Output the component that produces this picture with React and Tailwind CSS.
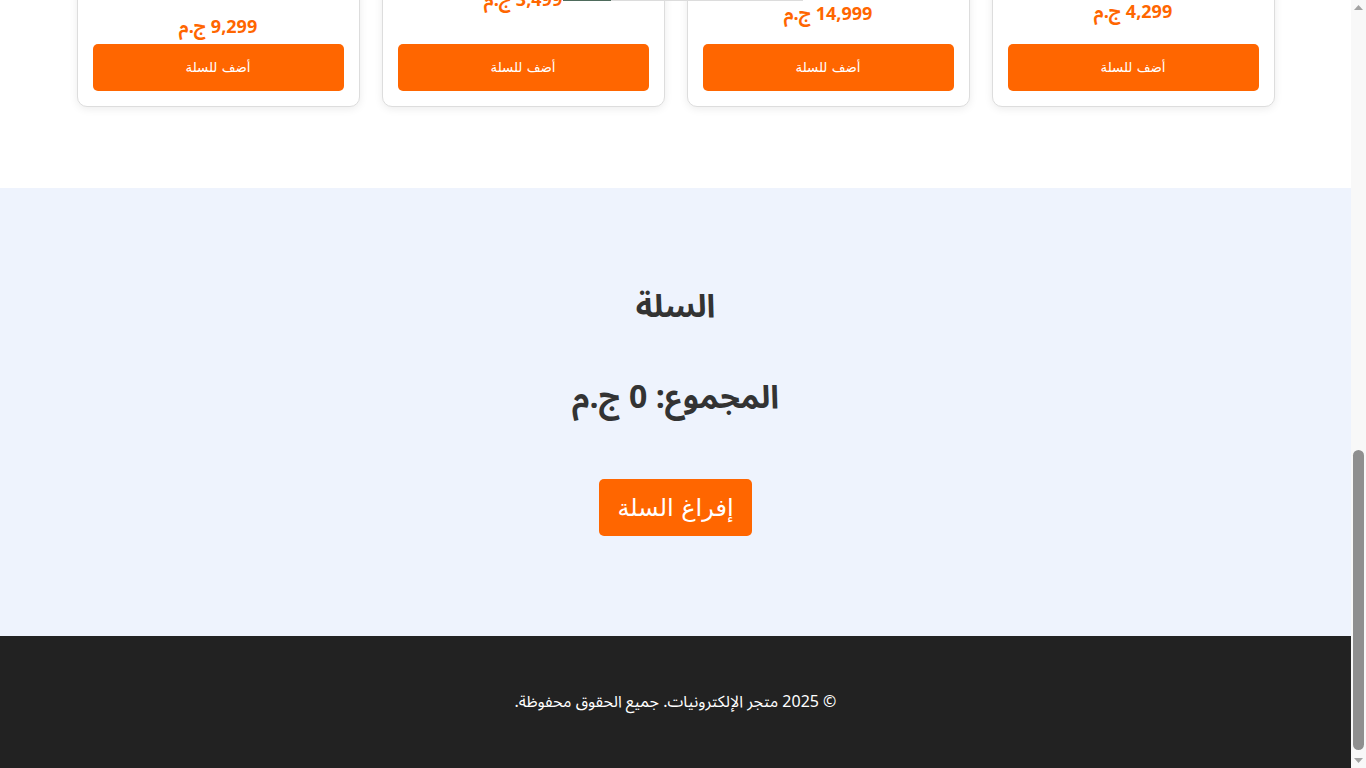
import React from "react";

const products = [
  { name: "سماعات لاسلكية", desc: "سماعات بلوتوث بجودة صوت عالية وعزل للضوضاء.", price: "4,299", descH: "h-[63px]" },
  { name: "هاتف ذكي", desc: "هاتف ذكي بشاشة كبيرة وكاميرا متطورة وبطارية تدوم طويلاً.", price: "14,999", descH: "h-[65px]" },
  { name: "ساعة ذكية", desc: "ساعة ذكية لمتابعة اللياقة البدنية والإشعارات.", price: "3,499", descH: "h-[51px]" },
  { name: "جهاز لوحي", desc: "جهاز لوحي خفيف الوزن مثالي للعمل والترفيه والدراسة.", price: "9,299", descH: "h-[78px]" },
];

function ProductCard({ p }) {
  return (
    <div className="flex flex-col rounded-[10px] border border-[#dddddd] bg-white p-[15px] text-center shadow-[0_2px_8px_rgba(0,0,0,0.08)]">
      <div className="h-[180px] rounded-[6px] bg-[#f3f4f6]" />
      <h3 className="mt-[12px] text-[18px] font-bold text-[#333]">{p.name}</h3>
      <p className={`mt-[6px] text-[14px] text-[#666] ${p.descH}`}>{p.desc}</p>
      <p className="text-[18px] font-bold leading-[27px] text-[#ff6600]">{p.price} ج.م</p>
      <div className="flex-1" />
      <button className="mt-[3px] h-[47px] w-full rounded-[5px] bg-[#ff6600] text-[13.33px] text-white [font-family:'DejaVu_Sans',sans-serif]">
        أضف للسلة
      </button>
    </div>
  );
}

function Scrollbar() {
  return (
    <div className="flex h-screen w-[15px] shrink-0 flex-col items-center bg-[#f8f8f8]">
      <div className="flex h-[15px] w-full items-center justify-center">
        <svg width="9" height="5" viewBox="0 0 9 5"><path d="M0 5 L4.5 0 L9 5 Z" fill="#a3a3a3" /></svg>
      </div>
      <div className="flex w-full flex-1 flex-col justify-end px-[2px] pb-[3px]">
        <div className="h-[300px] w-full rounded-full bg-[#8f8f8f]" />
      </div>
      <div className="flex h-[15px] w-full items-center justify-center">
        <svg width="9" height="5" viewBox="0 0 9 5"><path d="M0 0 L4.5 5 L9 0 Z" fill="#a3a3a3" /></svg>
      </div>
    </div>
  );
}

export default function App() {
  return (
    <div className="flex h-screen w-full overflow-hidden bg-white">
      <div dir="rtl" className="relative flex min-w-0 flex-1 flex-col justify-end overflow-hidden text-[#333] [font-family:'Noto_Sans_Arabic','Noto_Kufi_Arabic','Noto_Sans',sans-serif]">
        {/* toast edge peeking at the top */}
        <div className="absolute left-[563px] top-0 z-50 flex h-[1px] w-[240px]" dir="ltr">
          <div className="h-full w-[48px] bg-[#4e6b5c]" />
          <div className="h-full flex-1 bg-[#dcdcdc]" />
        </div>

        <header className="flex h-[70px] shrink-0 items-center justify-between bg-[#222] px-[40px] text-white">
          <div className="text-[22px] font-bold">متجر الإلكترونيات</div>
          <nav className="flex gap-[24px] text-[15px]">
            <span>الرئيسية</span>
            <span>المنتجات</span>
            <span>السلة</span>
          </nav>
        </header>

        <section className="shrink-0 bg-[#eef3fd] py-[110px] text-center">
          <h1 className="text-[36px] font-bold">مرحباً بك في متجر الإلكترونيات</h1>
          <p className="mt-[12px] text-[18px] text-[#555]">أفضل الأجهزة الإلكترونية بأفضل الأسعار</p>
        </section>

        <section className="shrink-0 pb-[81px] pt-[60px]">
          <h2 className="mb-[30px] text-center text-[28px] font-bold">منتجاتنا</h2>
          <div className="mx-auto grid w-[1198px] grid-cols-4 gap-[22px]">
            {products.map((p) => (
              <ProductCard key={p.price} p={p} />
            ))}
          </div>
        </section>

        <section className="flex h-[448px] shrink-0 flex-col items-center bg-[#eef3fd] pt-[98px]">
          <h2 className="text-[32px] font-bold leading-[42px] text-[#333]">السلة</h2>
          <div className="mt-[48px] text-[32px] font-bold leading-[45px] text-[#333]">المجموع: 0 ج.م</div>
          <button className="mt-[58px] h-[57px] rounded-[5px] bg-[#ff6600] px-[18px] text-[24px] text-white [font-family:'DejaVu_Sans',sans-serif]">
            إفراغ السلة
          </button>
        </section>

        <footer className="flex h-[132px] shrink-0 items-center justify-center bg-[#222] text-[16px] text-white">
          © 2025 متجر الإلكترونيات. جميع الحقوق محفوظة.
        </footer>
      </div>
      <Scrollbar />
    </div>
  );
}
